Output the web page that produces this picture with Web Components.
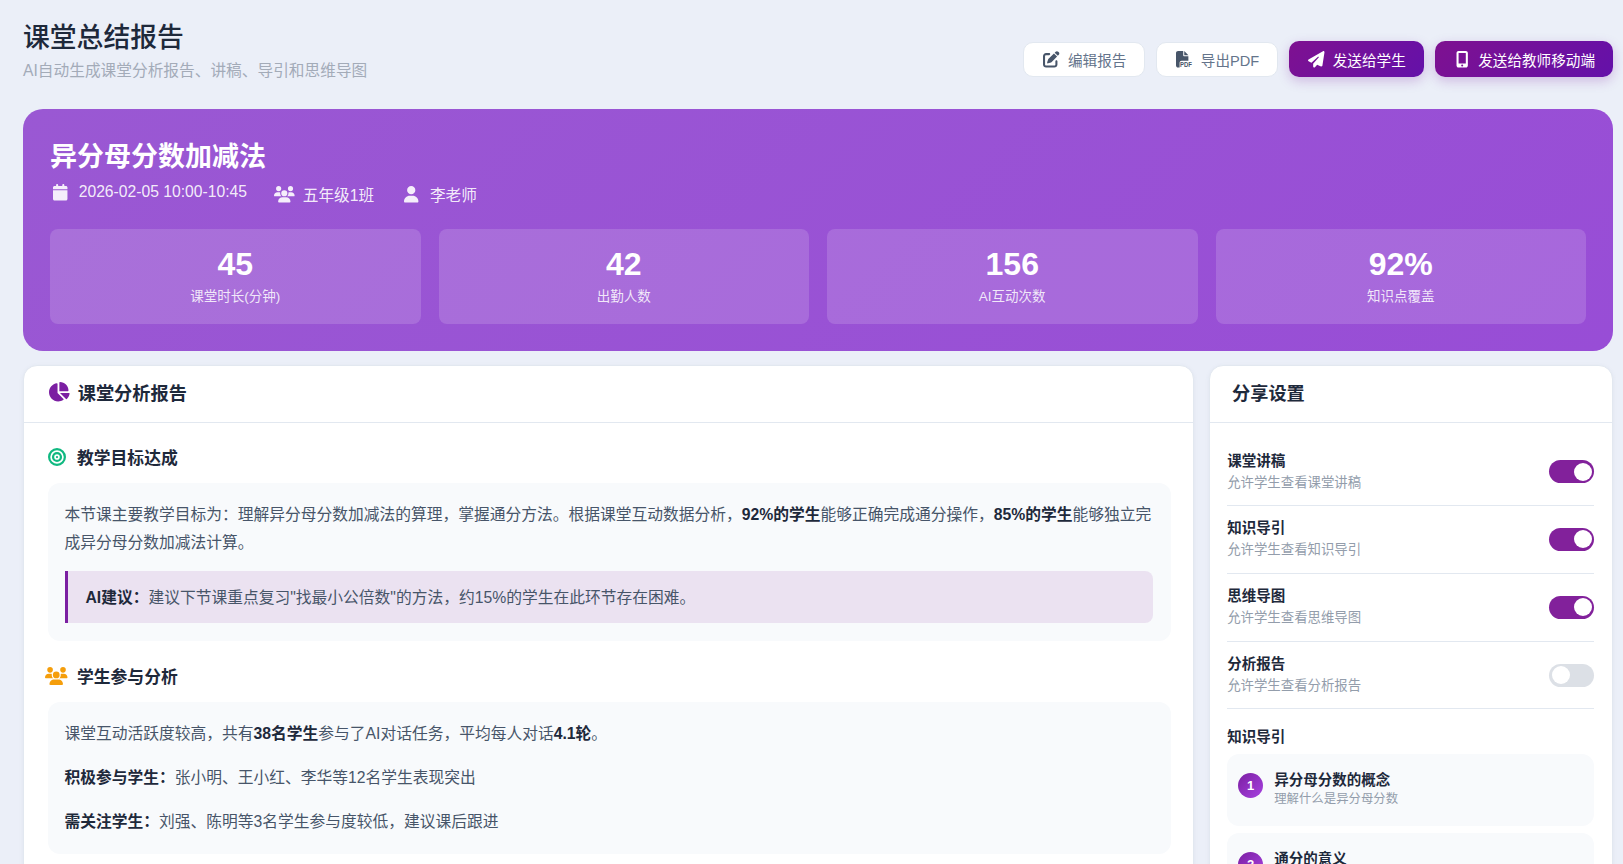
<!DOCTYPE html>
<html lang="zh-CN">
<head>
<meta charset="utf-8">
<title>课堂总结报告</title>
<style>
    html, body { height: 100%; overflow: hidden; }
    body {
        margin: 0;
        padding: 0 10px 0 23px;
        box-sizing: border-box;
        background: #ebeff8;
        color: #475569;
        font-family: "Liberation Sans", "Noto Sans CJK SC", sans-serif;
    }
    strong { color: #1e293b; font-weight: 700; }
    .columns {
        display: grid;
        grid-template-columns: 1171px 404px;
        gap: 15px;
        margin-top: 14px;
    }
</style>
</head>
<body>

<page-header heading="课堂总结报告" sub="AI自动生成课堂分析报告、讲稿、导引和思维导图">
    <action-button icon="edit">编辑报告</action-button>
    <action-button icon="pdf">导出PDF</action-button>
    <action-button icon="plane" primary>发送给学生</action-button>
    <action-button icon="mobile" primary>发送给教师移动端</action-button>
</page-header>

<lesson-hero heading="异分母分数加减法">
    <meta-item slot="meta" icon="calendar">2026-02-05 10:00-10:45</meta-item>
    <meta-item slot="meta" icon="users">五年级1班</meta-item>
    <meta-item slot="meta" icon="user">李老师</meta-item>
    <hero-stat value="45" label="课堂时长(分钟)"></hero-stat>
    <hero-stat value="42" label="出勤人数"></hero-stat>
    <hero-stat value="156" label="AI互动次数"></hero-stat>
    <hero-stat value="92%" label="知识点覆盖"></hero-stat>
</lesson-hero>

<div class="columns">
    <panel-card heading="课堂分析报告" icon="pie">
        <report-section heading="教学目标达成" icon="bullseye" color="#10b981">
            <p>本节课主要教学目标为：理解异分母分数加减法的算理，掌握通分方法。根据课堂互动数据分析，<strong>92%的学生</strong>能够正确完成通分操作，<strong>85%的学生</strong>能够独立完成异分母分数加减法计算。</p>
            <ai-tip><strong>AI建议：</strong>建议下节课重点复习"找最小公倍数"的方法，约15%的学生在此环节存在困难。</ai-tip>
        </report-section>
        <report-section heading="学生参与分析" icon="users" color="#f59e0b">
            <p>课堂互动活跃度较高，共有<strong>38名学生</strong>参与了AI对话任务，平均每人对话<strong>4.1轮</strong>。</p>
            <p><strong>积极参与学生：</strong>张小明、王小红、李华等12名学生表现突出</p>
            <p><strong>需关注学生：</strong>刘强、陈明等3名学生参与度较低，建议课后跟进</p>
        </report-section>
    </panel-card>

    <panel-card heading="分享设置" compact>
        <setting-row label="课堂讲稿" hint="允许学生查看课堂讲稿" on></setting-row>
        <setting-row label="知识导引" hint="允许学生查看知识导引" on></setting-row>
        <setting-row label="思维导图" hint="允许学生查看思维导图" on></setting-row>
        <setting-row label="分析报告" hint="允许学生查看分析报告"></setting-row>
        <guide-list heading="知识导引">
            <guide-item num="1" label="异分母分数的概念" hint="理解什么是异分母分数"></guide-item>
            <guide-item num="2" label="通分的意义"></guide-item>
        </guide-list>
    </panel-card>
</div>

<script>
/* Icon paths, keyed by the name passed to <ui-icon> */
const ICONS = {
    edit: ['0 0 512 512', 'M471.6 21.7c-21.9-21.9-57.3-21.9-79.2 0L362.3 51.7l97.9 97.9 30.1-30.1c21.9-21.9 21.9-57.3 0-79.2L471.6 21.7zm-299.2 220c-6.1 6.1-10.8 13.6-13.5 21.9l-29.6 88.8c-2.9 8.6-.6 18.1 5.8 24.6s15.9 8.7 24.6 5.8l88.8-29.6c8.2-2.7 15.7-7.4 21.9-13.5L437.7 172.3 339.7 74.3 172.4 241.7zM96 64C43 64 0 107 0 160V416c0 53 43 96 96 96H352c53 0 96-43 96-96V320c0-17.7-14.3-32-32-32s-32 14.3-32 32v96c0 17.7-14.3 32-32 32H96c-17.7 0-32-14.3-32-32V160c0-17.7 14.3-32 32-32h96c17.7 0 32-14.3 32-32s-14.3-32-32-32H96z'],
    plane: ['0 0 512 512', 'M498.1 5.6c10.1 7 15.4 19.1 13.5 31.2l-64 416c-1.5 9.7-7.4 18.2-16 23s-18.9 5.4-28 1.6L284 427.7l-68.5 74.1c-8.9 9.7-22.9 12.9-35.2 8.1S160 493.2 160 480V396.4c0-4 1.5-7.8 4.2-10.7L331.8 202.8c5.8-6.3 5.6-16-.4-22s-15.7-6.4-22-.7L106 360.8 17.7 316.6C7.1 311.3 .3 300.7 0 288.9s5.9-22.8 16.1-28.7l448-256c10.7-6.1 23.9-5.5 34 1.4z'],
    mobile: ['0 0 384 512', 'M16 64C16 28.7 44.7 0 80 0H304c35.3 0 64 28.7 64 64V448c0 35.3-28.7 64-64 64H80c-35.3 0-64-28.7-64-64V64zM224 448a32 32 0 1 0 -64 0 32 32 0 1 0 64 0zM304 64H80V384H304V64z'],
    calendar: ['0 0 448 512', 'M96 32V64H48C21.5 64 0 85.5 0 112v48H448V112c0-26.5-21.5-48-48-48H352V32c0-17.7-14.3-32-32-32s-32 14.3-32 32V64H160V32c0-17.7-14.3-32-32-32S96 14.3 96 32zM448 192H0V464c0 26.5 21.5 48 48 48H400c26.5 0 48-21.5 48-48V192z'],
    users: ['0 0 640 512', 'M144 0a80 80 0 1 1 0 160A80 80 0 1 1 144 0zM512 0a80 80 0 1 1 0 160A80 80 0 1 1 512 0zM0 298.7C0 239.8 47.8 192 106.7 192h42.7c15.9 0 31 3.5 44.6 9.7c-1.3 7.2-1.9 14.7-1.9 22.3c0 38.2 16.8 72.5 43.3 96c-.2 0-.4 0-.7 0H21.3C9.6 320 0 310.4 0 298.7zM405.3 320c-.2 0-.4 0-.7 0c26.6-23.5 43.3-57.8 43.3-96c0-7.6-.7-15-1.9-22.3c13.6-6.3 28.7-9.7 44.6-9.7h42.7C592.2 192 640 239.8 640 298.7c0 11.8-9.6 21.3-21.3 21.3H405.3zM224 224a96 96 0 1 1 192 0 96 96 0 1 1 -192 0zM128 485.3C128 411.7 187.7 352 261.3 352H378.7C452.3 352 512 411.7 512 485.3c0 14.7-11.9 26.7-26.7 26.7H154.7c-14.7 0-26.7-11.9-26.7-26.7z'],
    user: ['0 0 448 512', 'M224 256A128 128 0 1 0 224 0a128 128 0 1 0 0 256zm-45.7 48C79.8 304 0 383.8 0 482.3C0 498.7 13.3 512 29.7 512H418.3c16.4 0 29.7-13.3 29.7-29.7C448 383.8 368.2 304 269.7 304H178.3z'],
    pie: ['32 0 544 512', 'M304 240V16.6c0-9 7-16.6 16-16.6C443.7 0 544 100.3 544 224c0 9-7.6 16-16.6 16H304zM32 272C32 150.7 122.1 50.3 239 34.3c9.2-1.3 17 6.1 17 15.4V288L412.5 444.5c6.7 6.7 6.2 17.7-1.5 23.1C371.8 495.6 323.8 512 272 512C139.5 512 32 404.6 32 272zm526.4 16c9.3 0 16.6 7.8 15.4 17c-7.7 55.9-34.6 105.6-73.9 142.3c-6 5.6-15.4 5.2-21.2-.7L320 288H558.4z'],
    bullseye: ['0 0 512 512', 'M448 256A192 192 0 1 0 64 256a192 192 0 1 0 384 0zM0 256a256 256 0 1 1 512 0A256 256 0 1 1 0 256zm256 80a80 80 0 1 0 0-160 80 80 0 1 0 0 160zm0-224a144 144 0 1 1 0 288 144 144 0 1 1 0-288zM224 256a32 32 0 1 1 64 0 32 32 0 1 1 -64 0z'],
    pdf: ['0 0 512 512', 'M0 64C0 28.7 28.7 0 64 0H224V128c0 17.7 14.3 32 32 32H384V304H176c-35.3 0-64 28.7-64 64V512H64c-35.3 0-64-28.7-64-64V64zm384 64H256V0L384 128z']
};

/* Shared helper: attach an open shadow root with the given markup */
function mount(el, html) {
    el.attachShadow({ mode: 'open' }).innerHTML = html;
}

class UiIcon extends HTMLElement {
    connectedCallback() {
        const [box, d] = ICONS[this.getAttribute('name')];
        // the pdf badge is real svg text, not outlines
        const extra = this.getAttribute('name') === 'pdf'
            ? '<text x="125" y="490" font-family="Liberation Sans, sans-serif" font-size="230" font-weight="700" textLength="370" lengthAdjust="spacingAndGlyphs">PDF</text>'
            : '';
        mount(this, `
            <style>
                :host { display: inline-flex; align-items: center; justify-content: center; flex: none; }
                svg { height: var(--icon-size, 16px); display: block; fill: currentColor; flex: none; overflow: visible; }
            </style>
            <svg viewBox="${box}" aria-hidden="true"><path d="${d}"></path>${extra}</svg>
        `);
    }
}

class ActionButton extends HTMLElement {
    connectedCallback() {
        mount(this, `
            <style>
                :host {
                    display: inline-flex;
                    align-items: center;
                    justify-content: center;
                    gap: 7px;
                    height: 35px;
                    box-sizing: border-box;
                    padding: 0 18px;
                    background: #fff;
                    border: 1px solid #e2e8f0;
                    border-radius: 10px;
                    color: #64748b;
                    font-size: 14.6px;
                    --icon-size: 16.5px;
                }
                ui-icon { width: 18.5px; color: #475569; }
                :host([primary]) {
                    height: 36px;
                    border: 0;
                    color: #fff;
                    background: linear-gradient(135deg, #7e1190, #6411a9);
                    box-shadow: 0 4px 12px rgba(123, 31, 162, .25);
                }
                :host([primary]) ui-icon { color: #fff; }
            </style>
            <ui-icon name="${this.getAttribute('icon')}"></ui-icon><slot></slot>
        `);
    }
}

class PageHeader extends HTMLElement {
    connectedCallback() {
        mount(this, `
            <style>
                :host {
                    display: flex;
                    justify-content: space-between;
                    align-items: flex-end;
                    padding-top: 21px;
                    margin-bottom: 26px;
                }
                h1 { margin: 0; font-size: 26.8px; line-height: 34px; font-weight: 500; color: #1e293b; }
                p { margin: 4px 0 0; font-size: 15.7px; line-height: 24px; color: #a3abb8; }
                .actions { display: flex; align-items: center; gap: 11px; padding-bottom: 6px; }
            </style>
            <div>
                <h1>${this.getAttribute('heading')}</h1>
                <p>${this.getAttribute('sub')}</p>
            </div>
            <div class="actions"><slot></slot></div>
        `);
    }
}

class MetaItem extends HTMLElement {
    connectedCallback() {
        mount(this, `
            <style>
                :host { display: inline-flex; align-items: center; gap: 8px; --icon-size: 16.5px; }
                ui-icon { width: 20.7px; }
            </style>
            <ui-icon name="${this.getAttribute('icon')}"></ui-icon><span><slot></slot></span>
        `);
    }
}

class HeroStat extends HTMLElement {
    connectedCallback() {
        mount(this, `
            <style>
                :host {
                    display: block;
                    padding: 16px 0 17px;
                    text-align: center;
                    background: rgba(255, 255, 255, .15);
                    border-radius: 8px;
                }
                b { display: block; font-size: 32px; line-height: 38px; color: #fff; }
                span { display: block; margin-top: 4px; font-size: 13.5px; line-height: 20px; color: rgba(255, 255, 255, .85); }
            </style>
            <b>${this.getAttribute('value')}</b>
            <span>${this.getAttribute('label')}</span>
        `);
    }
}

class LessonHero extends HTMLElement {
    connectedCallback() {
        mount(this, `
            <style>
                :host {
                    display: block;
                    padding: 29px 27px 27px;
                    border-radius: 20px;
                    color: rgba(255, 255, 255, .9);
                    background: linear-gradient(135deg, #9a58d3, #984dd6);
                }
                h2 { margin: 0; font-size: 27px; line-height: 38px; font-weight: 700; color: #fff; }
                .meta {
                    display: flex;
                    align-items: flex-start;
                    gap: 27px;
                    margin: 7px 0 23px;
                    font-size: 15.7px;
                }
                .stats { display: grid; grid-template-columns: repeat(4, 1fr); gap: 18px; }
            </style>
            <h2>${this.getAttribute('heading')}</h2>
            <div class="meta"><slot name="meta"></slot></div>
            <div class="stats"><slot></slot></div>
        `);
    }
}

class PanelCard extends HTMLElement {
    connectedCallback() {
        const icon = this.getAttribute('icon');
        mount(this, `
            <style>
                :host {
                    display: block;
                    background: #fff;
                    border: 1px solid #e2e8f0;
                    border-radius: 14px;
                    box-shadow: 0 1px 4px rgba(100, 116, 139, .08);
                    box-sizing: border-box;
                }
                header {
                    display: flex;
                    align-items: center;
                    gap: 8.5px;
                    height: 57px;
                    box-sizing: border-box;
                    padding: 0 23px 5px 24.5px;
                    border-bottom: 1px solid #e2e8f0;
                    font-size: 18.2px;
                    font-weight: 600;
                    color: #1e293b;
                    --icon-size: 19.5px;
                }
                :host([compact]) header { padding-left: 22px; }
                ui-icon { color: #7b1fa2; }
                .body { padding: 0 22px 24px 23.5px; }
                :host([compact]) .body { padding: 15.3px 18px 24px 17.2px; }
            </style>
            <header>${icon ? `<ui-icon name="${icon}"></ui-icon>` : ''}<span>${this.getAttribute('heading')}</span></header>
            <div class="body"><slot></slot></div>
        `);
    }
}

class ReportSection extends HTMLElement {
    connectedCallback() {
        mount(this, `
            <style>
                :host { display: block; margin-top: 22px; }
                :host(:not(:first-child)) { margin-top: 23px; }
                .head {
                    display: flex;
                    align-items: center;
                    gap: 11.5px;
                    height: 24px;
                    margin-bottom: 14px;
                    font-size: 16.8px;
                    font-weight: 600;
                    color: #1e293b;
                    --icon-size: 18px;
                }
                ui-icon { width: 18px; color: ${this.getAttribute('color')}; }
                .panel {
                    padding: 18px 18px 18px 17px;
                    background: #f8fafc;
                    border-radius: 12px;
                    font-size: 15.75px;
                    line-height: 28px;
                    color: #475569;
                }
                ::slotted(p) { margin: 0; }
                ::slotted(p:not(:first-child)) { margin-top: 16px; }
            </style>
            <div class="head"><ui-icon name="${this.getAttribute('icon')}"></ui-icon><span>${this.getAttribute('heading')}</span></div>
            <div class="panel"><slot></slot></div>
        `);
    }
}

class AiTip extends HTMLElement {
    connectedCallback() {
        mount(this, `
            <style>
                :host {
                    display: block;
                    margin-top: 14px;
                    padding: 13px 18px 11px;
                    background: #ebe2f1;
                    border-left: 3px solid #7b1fa2;
                    border-radius: 0 8px 8px 0;
                }
            </style>
            <slot></slot>
        `);
    }
}

class SettingRow extends HTMLElement {
    connectedCallback() {
        mount(this, `
            <style>
                :host {
                    display: flex;
                    align-items: center;
                    justify-content: space-between;
                    padding: 11.4px 0;
                    border-bottom: 1px solid #e2e8f0;
                }
                b { display: block; font-size: 14.5px; line-height: 22px; font-weight: 600; color: #1e293b; }
                small { display: block; font-size: 13.4px; line-height: 22px; color: #939dab; }
                .toggle {
                    display: flex;
                    width: 45px;
                    height: 23px;
                    box-sizing: border-box;
                    padding: 2.5px;
                    border-radius: 12px;
                    background: #dce0e6;
                }
                .toggle::after { content: ""; width: 18px; height: 18px; border-radius: 50%; background: #fff; }
                :host([on]) .toggle { background: #82219b; justify-content: flex-end; }
            </style>
            <div>
                <b>${this.getAttribute('label')}</b>
                <small>${this.getAttribute('hint')}</small>
            </div>
            <div class="toggle"></div>
        `);
    }
}

class GuideList extends HTMLElement {
    connectedCallback() {
        mount(this, `
            <style>
                :host { display: block; margin-top: 17px; }
                h4 { margin: 0 0 6px; font-size: 14.5px; line-height: 22px; font-weight: 600; color: #1e293b; }
                .items { display: flex; flex-direction: column; gap: 7px; }
            </style>
            <h4>${this.getAttribute('heading')}</h4>
            <div class="items"><slot></slot></div>
        `);
    }
}

class GuideItem extends HTMLElement {
    connectedCallback() {
        const hint = this.getAttribute('hint');
        mount(this, `
            <style>
                :host {
                    display: flex;
                    gap: 11px;
                    min-height: 72px;
                    box-sizing: border-box;
                    padding: 16px 11px;
                    background: #f8fafc;
                    border-radius: 12px;
                }
                i {
                    display: flex;
                    align-items: center;
                    justify-content: center;
                    flex: none;
                    width: 25px;
                    height: 25px;
                    margin-top: 3px;
                    border-radius: 50%;
                    background: linear-gradient(135deg, #7b1fa2, #a742e0);
                    color: #fff;
                    font: 700 13px "Liberation Sans", sans-serif;
                }
                b { display: block; font-size: 14.5px; line-height: 20px; font-weight: 600; color: #1e293b; }
                small { display: block; font-size: 12.4px; line-height: 19px; color: #939dab; }
            </style>
            <i>${this.getAttribute('num')}</i>
            <div>
                <b>${this.getAttribute('label')}</b>
                ${hint ? `<small>${hint}</small>` : ''}
            </div>
        `);
    }
}

customElements.define('ui-icon', UiIcon);
customElements.define('action-button', ActionButton);
customElements.define('page-header', PageHeader);
customElements.define('meta-item', MetaItem);
customElements.define('hero-stat', HeroStat);
customElements.define('lesson-hero', LessonHero);
customElements.define('panel-card', PanelCard);
customElements.define('report-section', ReportSection);
customElements.define('ai-tip', AiTip);
customElements.define('setting-row', SettingRow);
customElements.define('guide-list', GuideList);
customElements.define('guide-item', GuideItem);
</script>
</body>
</html>
